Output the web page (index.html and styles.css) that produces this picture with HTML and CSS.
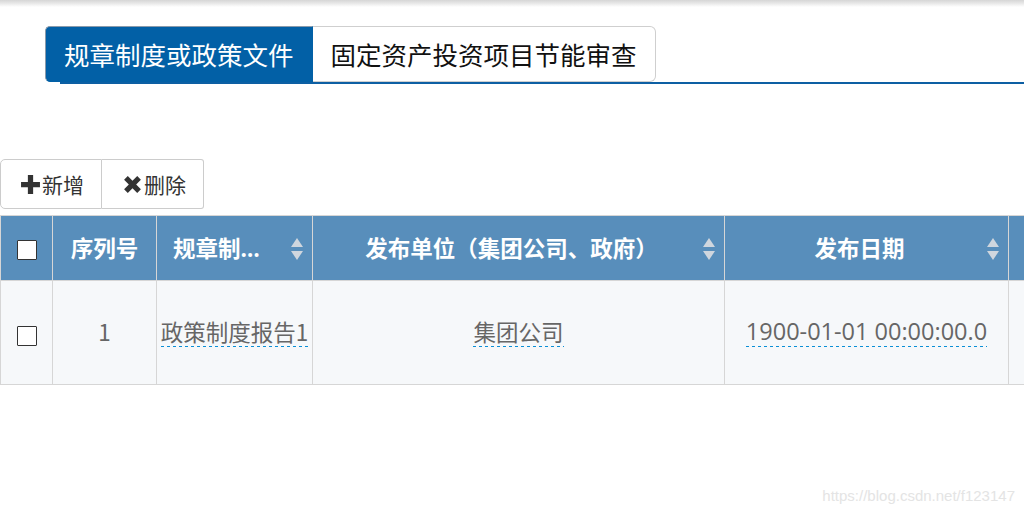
FILE: index.html
```html
<!DOCTYPE html>
<html lang="zh-CN">
<head>
<meta charset="utf-8">
<link rel="stylesheet" href="styles.css">
</head>
<body>
<div class="page">
  <div class="tabs">
    <div class="tab active">规章制度或政策文件</div>
    <div class="tab">固定资产投资项目节能审查</div>
  </div>
  <div class="tabline"></div>

  <div class="toolbar">
    <button class="btn first"><svg class="ico" viewBox="0 0 20 20"><path d="M7.5 1h5v6.5H19v5h-6.5V19h-5v-6.5H1v-5h6.5z" fill="#333"/></svg>新增</button>
    <button class="btn last"><svg class="ico" viewBox="0 0 20 20"><path d="M2 5.5L5.5 2 10 6.5 14.5 2 18 5.5 13.5 10 18 14.5 14.5 18 10 13.5 5.5 18 2 14.5 6.5 10z" fill="#333"/></svg>删除</button>
  </div>

  <div class="tablewrap">
    <table class="grid">
      <colgroup>
        <col class="c-chk"><col class="c-idx"><col class="c-name"><col class="c-unit"><col class="c-date"><col class="c-more">
      </colgroup>
      <thead>
        <tr>
          <th class="chkcell"><span class="chk"></span></th>
          <th><div class="th-in">序列号</div></th>
          <th class="sortable"><div class="th-in">规章制度或政策文件名称</div><span class="sort"></span></th>
          <th class="sortable"><div class="th-in">发布单位（集团公司、政府）</div><span class="sort"></span></th>
          <th class="sortable"><div class="th-in">发布日期</div><span class="sort"></span></th>
          <th></th>
        </tr>
      </thead>
      <tbody>
        <tr>
          <td class="chkcell"><span class="chk"></span></td>
          <td><span class="cell">1</span></td>
          <td><span class="cell edit">政策制度报告1</span></td>
          <td><span class="cell edit">集团公司</span></td>
          <td><span class="cell edit num">1900-01-01 00:00:00.0</span></td>
          <td></td>
        </tr>
      </tbody>
    </table>
  </div>
  <div class="watermark">https://blog.csdn.net/f123147</div>
</div>
</body>
</html>
```

FILE: styles.css
```css
html, body {
  margin: 0;
  padding: 0;
}
body {
  width: 1024px;
  height: 512px;
  overflow: hidden;
  background: linear-gradient(to bottom, #d6d6d6 0px, #e6e6e6 3px, #ffffff 7px) no-repeat;
  background-color: #fff;
  font-family: "Noto Sans CJK SC", "Open Sans", sans-serif;
  color: #333;
}
.page {
  position: relative;
  height: 512px;
  display: flow-root;
}
.tabs {
  display: flex;
  margin: 26px 0 0 45px;
  height: 56px;
}
.tab {
  display: flex;
  align-items: center;
  padding: 0 18px;
  font-size: 25.5px;
  color: #111;
  border: 1px solid #cfcfcf;
  border-left: none;
  border-radius: 0 6px 6px 0;
  background: #fff;
  line-height: 1;
}
.tab.active {
  background: #0260a6;
  color: #fff;
  border: 1px solid #0260a6;
  border-left-color: #8a9aab;
  border-top-color: #8a9aab;
  border-radius: 5px 0 0 5px;
}
.tabline {
  margin-left: 60px;
  height: 2px;
  background: #0d5fa3;
}
.toolbar {
  display: flex;
  margin-top: 75px;
  height: 50px;
}
.btn {
  display: flex;
  align-items: center;
  height: 50px;
  padding: 0 0 0 19px;
  background: #fff;
  border: 1px solid #cccccc;
  font-family: "Noto Sans CJK SC", sans-serif;
  font-size: 21px;
  color: #333;
  margin: 0;
}
.btn.first {
  border-radius: 5px 0 0 5px;
  width: 102px;
}
.btn.last {
  border-left: none;
  border-radius: 0 3px 3px 0;
  width: 102px;
  padding-left: 20px;
}
.ico {
  width: 21px;
  height: 21px;
  margin-right: 1px;
}
.tablewrap {
  margin-top: 6px;
  width: 1024px;
  overflow: hidden;
}
.grid {
  table-layout: fixed;
  border-collapse: collapse;
  width: 1100px;
}
.c-chk { width: 52px; }
.c-idx { width: 104px; }
.c-name { width: 156px; }
.c-unit { width: 412px; }
.c-date { width: 284px; }
.c-more { width: 92px; }
.grid th, .grid td {
  border: 1px solid #d6d6d6;
  text-align: center;
  padding: 0;
}
.grid th {
  background: #588ebb;
  color: #fff;
  height: 64px;
  font-family: "Open Sans", "Noto Sans CJK SC", sans-serif;
  font-size: 22.5px;
  font-weight: bold;
  position: relative;
}
.th-in {
  padding: 0 30px 0 16px;
  white-space: nowrap;
  overflow: hidden;
  text-overflow: ellipsis;
  line-height: 66px;
  height: 64px;
}
.grid th:nth-child(2) .th-in {
  padding: 0 6px;
}
.sort {
  position: absolute;
  right: 9px;
  top: 22px;
  width: 12px;
  height: 22px;
}
.sort::before, .sort::after {
  content: "";
  position: absolute;
  left: 0;
  border-left: 6px solid transparent;
  border-right: 6px solid transparent;
}
.sort::before {
  top: 0;
  border-bottom: 9px solid #cfd6de;
}
.sort::after {
  bottom: 0;
  border-top: 9px solid #cfd6de;
}
.grid td {
  background: #f6f8fa;
  height: 103px;
  font-size: 22.5px;
  color: #666;
}
.cell {
  display: inline-block;
  line-height: 30px;
  position: relative;
  top: -2px;
}
.chkcell .chk {
  display: inline-block;
  width: 18px;
  height: 18px;
  border: 1px solid #333;
  background: #fff;
  vertical-align: middle;
  border-radius: 1px;
}
.edit {
  white-space: nowrap;
  padding-bottom: 1px;
  background-image: linear-gradient(to right, #0a8fd6 0, #0a8fd6 3px, transparent 3px, transparent 6px);
  background-size: 6px 1px;
  background-repeat: repeat-x;
  background-position: 0 100%;
}
.num {
  font-family: "Open Sans", "Noto Sans", sans-serif;
  font-size: 23.5px;
}
.watermark {
  position: absolute;
  right: 9px;
  bottom: 8px;
  font-family: "Liberation Sans", Arial, sans-serif;
  font-size: 15px;
  color: #e4e4e4;
}
```
